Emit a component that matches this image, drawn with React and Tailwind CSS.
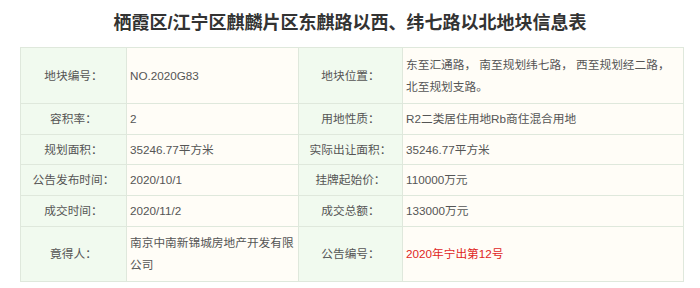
const rows = [
  {
    h: "h-[56px]",
    a: "地块编号：",
    b: "NO.2020G83",
    c: "地块位置：",
    d: (
      <>
        东至汇通路， 南至规划纬七路， 西至规划经二路，
        <br />
        北至规划支路。
      </>
    ),
  },
  { h: "h-[31px]", a: "容积率：", b: "2", c: "用地性质：", d: "R2二类居住用地Rb商住混合用地" },
  { h: "h-[30px]", a: "规划面积：", b: "35246.77平方米", c: "实际出让面积：", d: "35246.77平方米" },
  { h: "h-[31px]", a: "公告发布时间：", b: "2020/10/1", c: "挂牌起始价：", d: "110000万元" },
  { h: "h-[31px]", a: "成交时间：", b: "2020/11/2", c: "成交总额：", d: "133000万元" },
  {
    h: "h-[55px]",
    a: "竟得人：",
    b: (
      <>
        南京中南新锦城房地产开发有限
        <br />
        公司
      </>
    ),
    c: "公告编号：",
    d: <span className="text-[#e0261e]">2020年宁出第12号</span>,
  },
];

export default function App() {
  const label = "border border-[#dfe8dc] bg-[#f1faef] text-center p-0";
  const value = "border border-[#dfe8dc] bg-[#fffdf7] text-left pl-[3px] pr-0 py-0 whitespace-nowrap";
  return (
    <div
      className="w-[700px] h-[288px] bg-white overflow-hidden"
      style={{ fontFamily: '"Liberation Sans", "Noto Sans CJK SC", sans-serif' }}
    >
      {/* title */}
      <h1 className="h-[47px] pt-[10px] text-center text-[18px] leading-[26px] font-bold text-[#333]">
        栖霞区/江宁区麒麟片区东麒路以西、纬七路以北地块信息表
      </h1>

      {/* table */}
      <table className="ml-[20px] w-[663px] border-collapse table-fixed text-[11.7px] leading-[22px] text-[#555]">
        <colgroup>
          <col className="w-[106px]" />
          <col className="w-[172px]" />
          <col className="w-[104px]" />
          <col className="w-[281px]" />
        </colgroup>
        <tbody>
          {rows.map((r, i) => (
            <tr key={i} className={r.h}>
              <td className={label}>{r.a}</td>
              <td className={value}>{r.b}</td>
              <td className={label}>{r.c}</td>
              <td className={value}>{r.d}</td>
            </tr>
          ))}
        </tbody>
      </table>
    </div>
  );
}
